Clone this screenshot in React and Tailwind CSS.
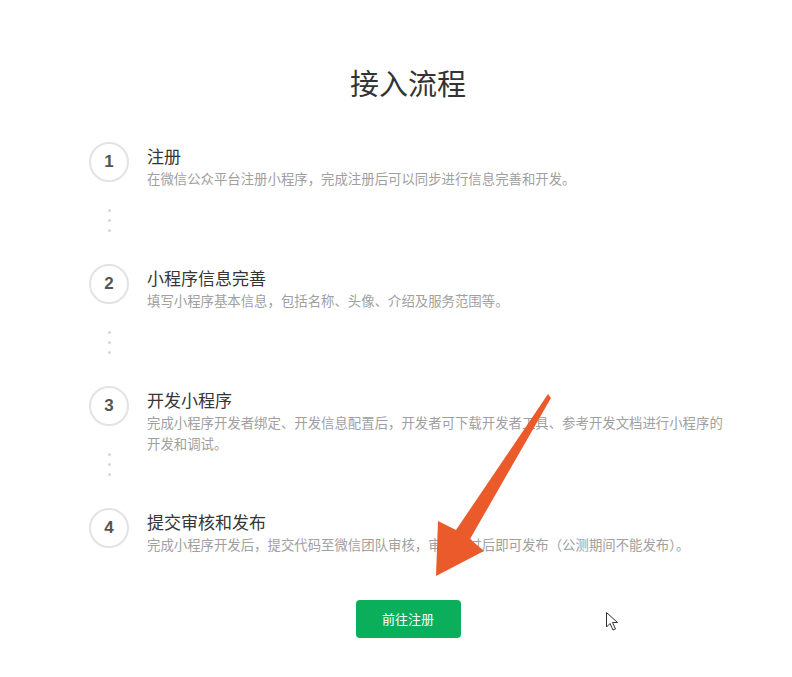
import React from "react";

const steps = [
  { n: 1, title: "注册", desc: "在微信公众平台注册小程序，完成注册后可以同步进行信息完善和开发。" },
  { n: 2, title: "小程序信息完善", desc: "填写小程序基本信息，包括名称、头像、介绍及服务范围等。" },
  {
    n: 3,
    title: "开发小程序",
    desc: "完成小程序开发者绑定、开发信息配置后，开发者可下载开发者工具、参考开发文档进行小程序的开发和调试。",
  },
  { n: 4, title: "提交审核和发布", desc: "完成小程序开发后，提交代码至微信团队审核，审核通过后即可发布（公测期间不能发布）。" },
];

function Step({ step, last }) {
  return (
    <div className={`flex gap-[18px] ${last ? "" : "h-[122px]"}`}>
      <div className="flex w-10 flex-col items-center">
        <div className="flex h-10 w-10 items-center justify-center rounded-full border-2 border-[#e3e3e3] font-['Liberation_Sans',sans-serif] text-[17px] font-bold text-[#555]">
          {step.n}
        </div>
        {!last && (
          <div className="mt-[27px] flex flex-col gap-[7px]">
            <span className="h-[3px] w-[3px] rounded-full bg-[#d6d6d6]" />
            <span className="h-[3px] w-[3px] rounded-full bg-[#d6d6d6]" />
            <span className="h-[3px] w-[3px] rounded-full bg-[#d6d6d6]" />
          </div>
        )}
      </div>
      <div className="w-[585px] pt-[2px]">
        <div className="text-[17px] leading-[24px] text-[#353535]">{step.title}</div>
        <div className="text-[13.4px] leading-[21px] text-[#a0a0a0]">{step.desc}</div>
      </div>
    </div>
  );
}

export default function App() {
  return (
    <div className="relative h-[677px] w-[792px] overflow-hidden bg-white font-['Noto_Sans_CJK_SC',sans-serif]">
      <h1 className="pl-[24px] pt-[60px] text-center text-[29px] font-normal leading-[44px] text-[#333]">接入流程</h1>

      <div className="mt-[38px] pl-[89px]">
        {steps.map((s, i) => (
          <Step key={s.n} step={s} last={i === steps.length - 1} />
        ))}
      </div>

      <div className="mt-[45px] flex justify-center pl-[24px]">
        <button className="h-[38px] w-[105px] rounded-[4px] bg-[#0aae5b] text-[13px] text-white">前往注册</button>
      </div>

      {/* annotation arrow + mouse cursor drawn over the page */}
      <svg className="pointer-events-none absolute inset-0" width="792" height="677" viewBox="0 0 792 677">
        <polygon
          points="548,394 551,398 470,539 484,551 436,576 438,521 456,530"
          fill="#ea5a2a"
        />
        <path
          d="M606.5 612.5 L606.5 627 L610 623.5 L613 630 L615.5 629 L612.5 622.5 L617.5 622.5 Z"
          fill="#fff"
          stroke="#333"
          strokeWidth="1"
          strokeLinejoin="round"
        />
      </svg>
    </div>
  );
}
